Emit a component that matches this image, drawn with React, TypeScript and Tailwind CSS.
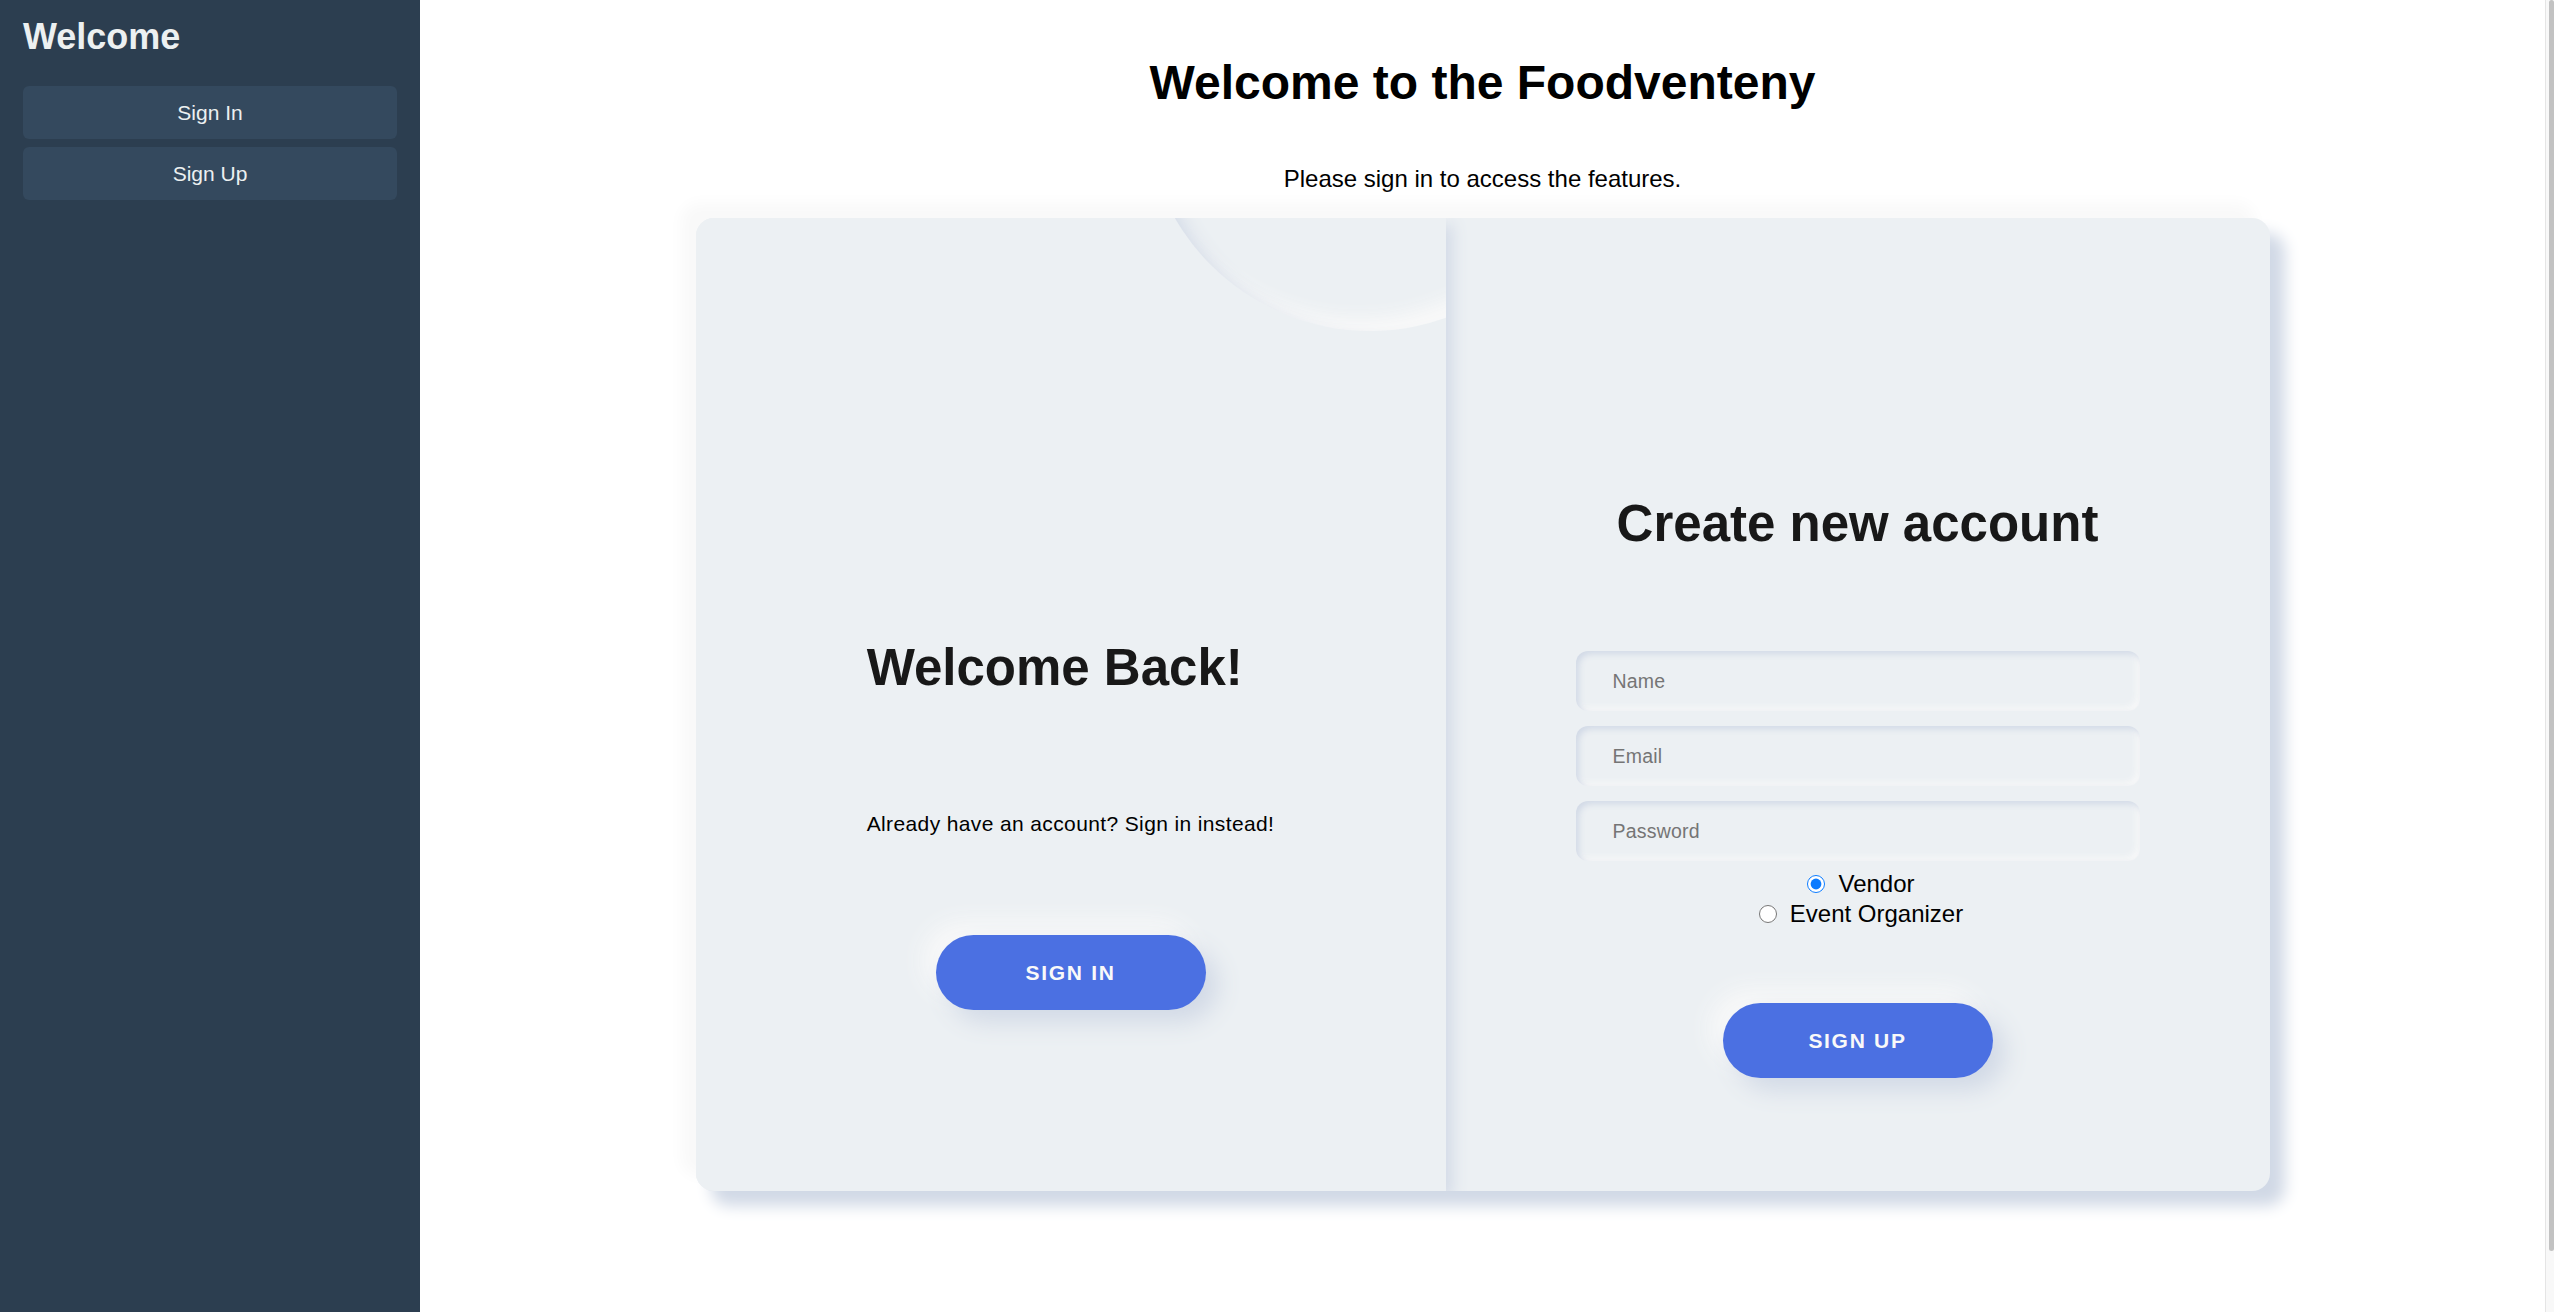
import React from 'react';

const FIELDS = ['Name', 'Email', 'Password'];

const neuButton =
  'w-[270px] h-[75px] rounded-full bg-[#4b70e2] text-[21px] font-bold tracking-[1.7px] text-[#f9f9f9] shadow-[12px_12px_24px_#d1d9e6,-12px_-12px_24px_#f9f9f9]';

export default function App() {
  return (
    <div className="flex h-screen w-full overflow-hidden font-['Liberation_Sans',Arial,sans-serif]">
      {/* sidebar */}
      <aside className="w-[420px] shrink-0 bg-[#2c3e50] px-[23px] pt-[16px]">
        <h2 className="text-[36px] leading-[41px] font-bold text-[#ecf0f1]">Welcome</h2>
        <div className="mt-[29px] flex flex-col gap-[8px]">
          <button className="h-[53px] w-full rounded-[6px] bg-[#34495e] text-[21px] text-[#ecf0f1]">Sign In</button>
          <button className="h-[53px] w-full rounded-[6px] bg-[#34495e] text-[21px] text-[#ecf0f1]">Sign Up</button>
        </div>
      </aside>

      {/* main */}
      <main className="flex min-w-0 flex-1 flex-col items-center bg-white">
        <h1 className="mt-[55px] text-[48px] leading-[55px] font-bold text-black">Welcome to the Foodventeny</h1>
        <p className="mt-[55px] text-[24px] leading-[28px] text-black">Please sign in to access the features.</p>

        <div className="mt-[25px] flex h-[973px] w-[1574px] shrink-0 overflow-hidden rounded-[18px] bg-[#ecf0f3] shadow-[15px_15px_15px_#d1d9e6,-15px_-15px_15px_#f9f9f9]">
          {/* switch panel */}
          <div className="relative z-10 flex h-full w-[750px] shrink-0 flex-col items-center overflow-hidden bg-[#ecf0f3] pt-[420px] shadow-[6px_6px_15px_#d1d9e6,-6px_-6px_15px_#f9f9f9]">
            <div className="absolute left-[449px] top-[-337px] h-[450px] w-[450px] rounded-full bg-[#ecf0f3] shadow-[inset_12px_12px_18px_#d1d9e6,inset_-12px_-12px_18px_#f9f9f9]" />
            <div className="flex flex-col items-start">
              <h2 className="text-[51px] leading-[59px] font-bold text-[#181818]">Welcome Back!</h2>
              <p className="mt-[110px] text-center text-[21px] leading-[34px] tracking-[0.375px] text-black">
                Already have an account? Sign in instead!
              </p>
            </div>
            <button className={`mt-[94px] ${neuButton}`}>SIGN IN</button>
          </div>

          {/* sign up form */}
          <div className="flex flex-1 flex-col items-center pt-[276px]">
            <h2 className="text-[51px] leading-[59px] font-bold text-[#181818]">Create new account</h2>
            <div className="mt-[98px] flex flex-col gap-[15px]">
              {FIELDS.map((f) => (
                <input
                  key={f}
                  type={f === 'Password' ? 'password' : 'text'}
                  placeholder={f}
                  className="h-[60px] w-[564px] rounded-[12px] bg-[#ecf0f3] pl-[37px] text-[19.5px] tracking-[0.2px] outline-none shadow-[inset_3px_3px_6px_#d1d9e6,inset_-3px_-3px_6px_#f9f9f9] placeholder:text-[#757575]"
                />
              ))}
            </div>
            <div className="mt-[8px] flex flex-col items-center text-[24px] text-black">
              <label className="flex h-[30px] items-center">
                <input type="radio" name="role" defaultChecked className="ml-[7px] mr-[13px] h-[18px] w-[18px] accent-[#0b7bff]" />
                Vendor
              </label>
              <label className="flex h-[30px] items-center">
                <input type="radio" name="role" className="ml-[7px] mr-[13px] h-[18px] w-[18px] accent-[#0b7bff]" />
                Event Organizer
              </label>
            </div>
            <button className={`mt-[74px] ${neuButton}`}>SIGN UP</button>
          </div>
        </div>
      </main>

      {/* scrollbar */}
      <div className="flex w-[9px] shrink-0 justify-end border-l border-[#e5e5e5] bg-[#f8f8f8]">
        <div className="h-[1251px] w-[5px] rounded-full bg-[#c2c2c2]" />
      </div>
    </div>
  );
}
